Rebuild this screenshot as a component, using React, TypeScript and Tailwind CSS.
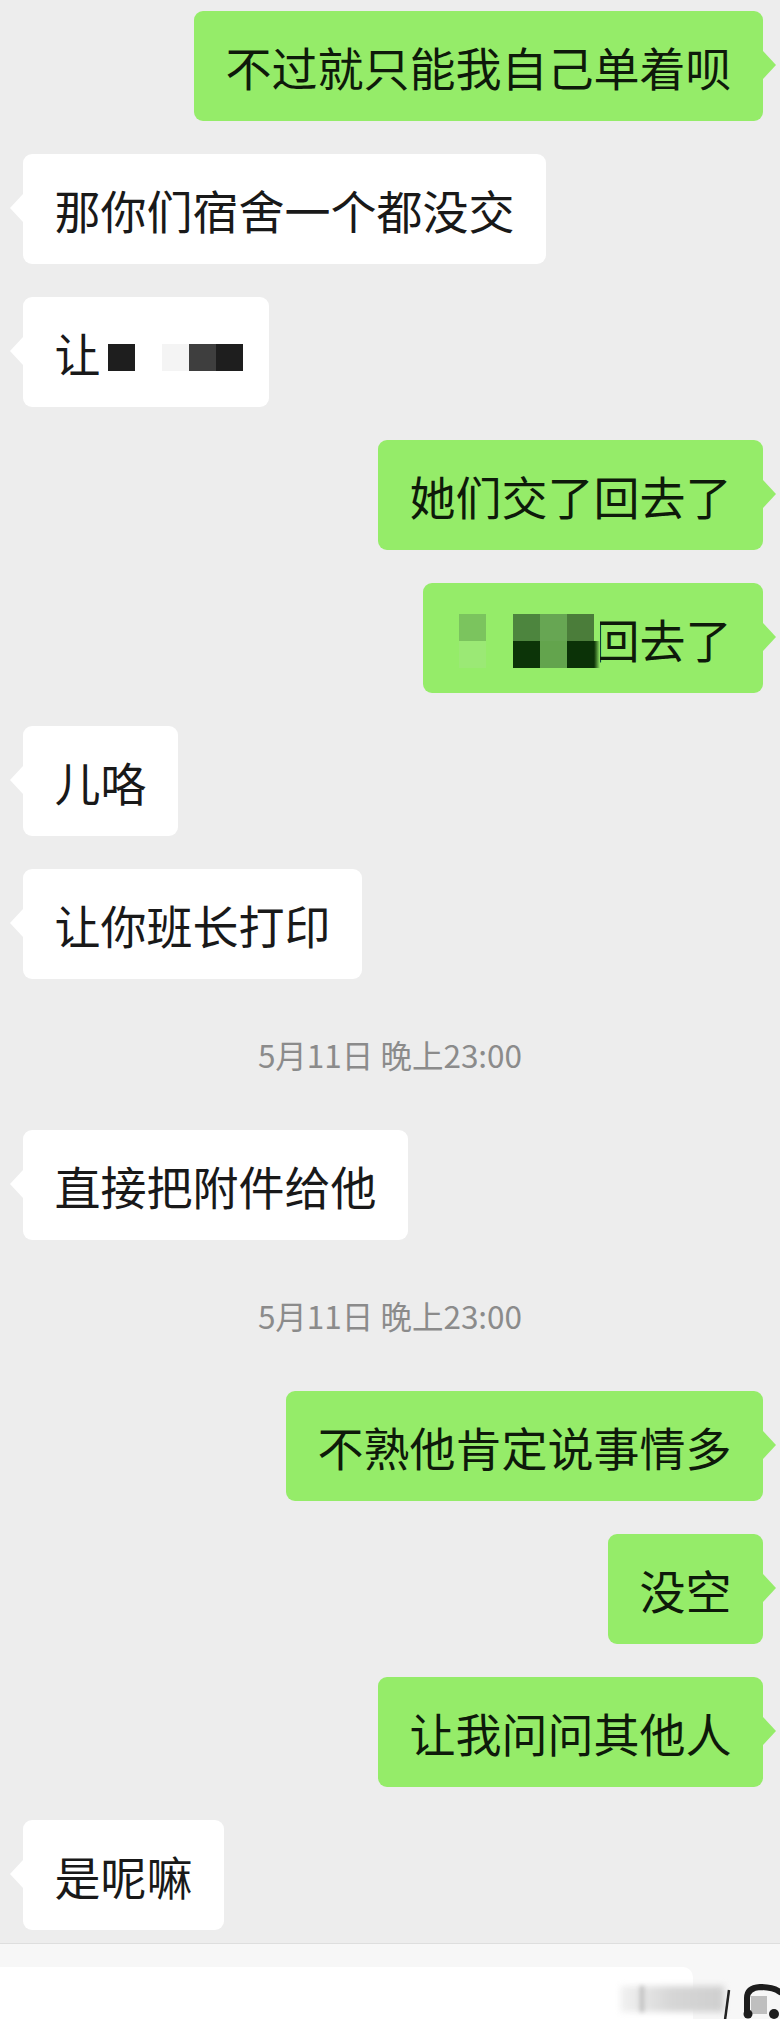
import clsx from 'clsx'
import type { ReactNode } from 'react'

function Bubble({ mine, width, children }: { mine?: boolean; width?: string; children: ReactNode }) {
  return (
    <div className={clsx('flex', mine ? 'justify-end pr-[17px]' : 'justify-start pl-[23px]')}>
      <div
        className={clsx(
          'relative flex h-[110px] shrink-0 items-center rounded-[9px] px-[31.5px] text-[46px] leading-none whitespace-nowrap',
          mine ? 'bg-[#95ec69] text-[#0e1a0a]' : 'bg-white text-[#191919]',
          width,
        )}
      >
        <span
          className={clsx(
            'absolute top-[40px] h-0 w-0 border-y-[14px] border-y-transparent',
            mine ? 'right-[-13px] border-l-[13px] border-l-[#95ec69]' : 'left-[-13px] border-r-[13px] border-r-white',
          )}
        />
        {children}
      </div>
    </div>
  )
}

function Time({ text }: { text: string }) {
  return (
    <div className="flex h-[85px] items-center justify-center text-[31.5px] text-[#8b8b8b]">{text}</div>
  )
}

export default function App() {
  return (
    <div className="flex min-h-[2019px] w-[780px] flex-col bg-[#ededed] font-['Noto_Sans_CJK_SC','Noto_Sans',sans-serif]">
      <div className="flex flex-col gap-[33px] pt-[11px] pb-[13px]">
        <Bubble mine>不过就只能我自己单着呗</Bubble>
        <Bubble>那你们宿舍一个都没交</Bubble>
        <Bubble width="w-[246px]">
          <span>让</span>
          <span className="mt-[11px] ml-[7.5px] h-[27px] w-[27px] shrink-0 bg-[#1e1e1e]" />
          <span className="mt-[11px] ml-[27px] h-[27px] w-[27px] shrink-0 bg-[#f4f4f4]" />
          <span className="mt-[11px] h-[27px] w-[27px] shrink-0 bg-[#3e3e3e]" />
          <span className="mt-[11px] h-[27px] w-[27px] shrink-0 bg-[#1e1e1e]" />
        </Bubble>
        <Bubble mine>她们交了回去了</Bubble>
        <Bubble mine width="w-[340px]">
          <div className="mt-[5px] ml-[4.5px] flex shrink-0 flex-col">
            <span className="h-[27px] w-[27px] bg-[#7bc45e]" />
            <span className="h-[27px] w-[27px] bg-[#9be975]" />
          </div>
          <div className="relative z-10 mt-[5px] ml-[27px] grid shrink-0 grid-cols-[27px_27px_27px_6px] grid-rows-[27px_27px]">
            <span className="bg-[#4d853e]" />
            <span className="bg-[#67a653]" />
            <span className="bg-[#4b7d3a]" />
            <span className="bg-[#95ec69]" />
            <span className="bg-[#0c3408]" />
            <span className="bg-[#63a44d]" />
            <span className="bg-[#0b3207]" />
            <span className="bg-linear-to-r from-[#0b3207] to-[#95ec69]" />
          </div>
          <span className="ml-[-6.5px]">回去了</span>
        </Bubble>
        <Bubble>儿咯</Bubble>
        <Bubble>让你班长打印</Bubble>
        <Time text="5月11日 晚上23:00" />
        <Bubble>直接把附件给他</Bubble>
        <Time text="5月11日 晚上23:00" />
        <Bubble mine>不熟他肯定说事情多</Bubble>
        <Bubble mine>没空</Bubble>
        <Bubble mine>让我问问其他人</Bubble>
        <Bubble>是呢嘛</Bubble>
      </div>

      {/* input bar, cut off at the bottom of the shot */}
      <div className="relative flex flex-1 flex-col border-t border-[#dedede] bg-[#f7f7f7]">
        <div className="h-[23px]" />
        <div className="flex flex-1">
          <div className="w-[693px] rounded-tr-[10px] bg-white" />
        </div>
        <div className="absolute top-[42px] left-[620px] h-[26px] w-[104px] bg-linear-to-r from-[#f2f2f2] via-[#d6d6d6] to-[#cfcfcf] blur-[3px]" />
        <div className="absolute top-[42px] left-[640px] h-[26px] w-[4px] bg-[#bdbdbd] blur-[2px]" />
        <svg className="absolute top-[38px] left-[718px]" width="62" height="38" viewBox="0 0 62 38">
          <path d="M11 8 L7 38" stroke="#222" strokeWidth="2.5" fill="none" />
          <path
            d="M29 32 V16 Q29 6 42 5 Q55 5 62 10"
            stroke="#1d1d1d"
            strokeWidth="6"
            fill="none"
            strokeLinecap="round"
          />
          <rect x="33" y="14" width="16" height="18" fill="#9a9a9a" opacity="0.6" />
          <circle cx="30" cy="32" r="4.5" fill="#1d1d1d" />
          <circle cx="56" cy="32" r="5" fill="#1d1d1d" />
        </svg>
      </div>
    </div>
  )
}
